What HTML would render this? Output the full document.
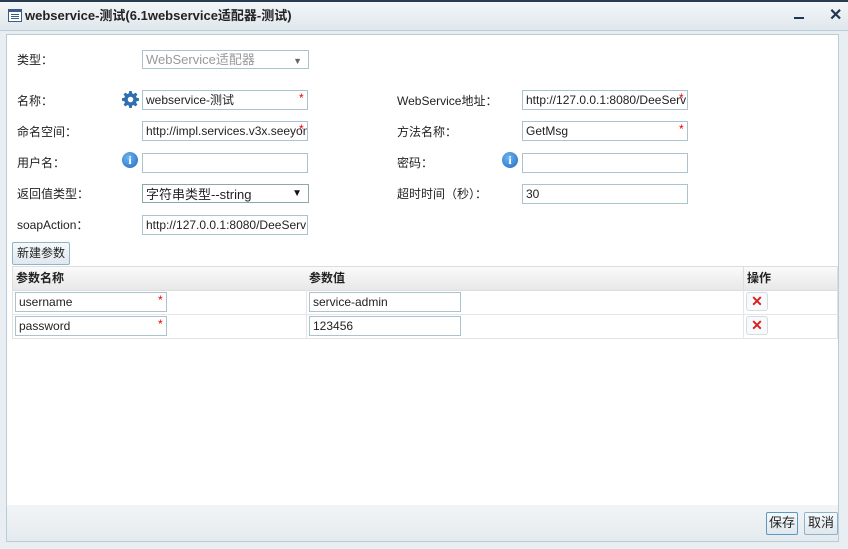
<!DOCTYPE html>
<html><head><meta charset="utf-8"><style>
*{box-sizing:border-box;margin:0;padding:0}
body{width:848px;height:549px;background:#e9eef2;font-family:"Liberation Sans","Noto Sans CJK SC",sans-serif;font-size:12px;line-height:14px;color:#222;position:relative;overflow:hidden}
.a{position:absolute}
.title{left:0;top:0;width:848px;height:31px;background:linear-gradient(#f3f6f8,#dfe7ec);border-top:2px solid #2a3c50;border-bottom:1px solid #b9cdd8}
.body{left:6px;top:34px;width:833px;height:472px;background:#fff;border:1px solid #b9cdd8}
.foot{left:6px;top:505px;width:833px;height:37px;background:linear-gradient(#f2f5f7,#e4eaee);border:1px solid #b9cdd8;border-top:none}
.lbl{font-size:12px;color:#222}
.in{height:20px;border:1px solid #aac3ce;background:#fff;padding:2px 3px;font-size:12px;line-height:15px;white-space:nowrap;overflow:hidden;color:#222}
.star{color:#e00;font-size:12px}
.btn{border:1px solid #8fb4c8;border-radius:2px;background:linear-gradient(#f6f9fb,#dfe8ee);font-size:12px;text-align:center;line-height:20px;color:#222}
.info{width:16px;height:16px;border-radius:50%;background:radial-gradient(circle at 40% 35%,#6fb4ee,#1c6cc4);color:#fff;font-weight:bold;font-size:12px;text-align:center;line-height:16px;font-family:"Liberation Serif",serif}
.th{background:linear-gradient(#fafafa,#e8e8e8);border:1px solid #ddd;font-weight:bold;line-height:22px;padding-left:3px}
.x{width:22px;height:19px;border:1px solid #d3dde3;border-radius:3px;background:#f7f9fa;color:#d92020;font-weight:bold;text-align:center;line-height:17px;font-size:14px}
</style></head><body>
<div class="a title"></div>
<svg class="a" style="left:8px;top:9px" width="14" height="13"><rect x="0.5" y="0.5" width="13" height="12" fill="#fff" stroke="#3b5f84"/><rect x="1" y="1" width="12" height="2" fill="#3b5f84"/><path d="M3 5.5h8M3 7.5h8M3 9.5h8" stroke="#3b5f84"/></svg>
<div class="a" style="left:25px;top:8px;font-weight:bold;font-size:13px;line-height:15px;color:#222">webservice-测试(6.1webservice适配器-测试)</div>
<div class="a" style="left:794px;top:17px;width:10px;height:2px;background:#1f3550"></div>
<div class="a" style="left:829px;top:7px;font-weight:bold;font-size:16px;line-height:17px;color:#1f3550">✕</div>
<div class="a body"></div>
<div class="a foot"></div>

<div class="a lbl" style="left:17px;top:53px">类型：</div>
<div class="a in" style="left:142px;top:50px;width:167px;height:19px;color:#999;font-size:13px;line-height:14px">WebService适配器<span style="position:absolute;right:6px;top:3px;font-size:9px;color:#666">▼</span></div>

<div class="a lbl" style="left:17px;top:94px">名称：</div>
<svg class="a" style="left:122px;top:91px" width="17" height="17" viewBox="0 0 16 16"><path fill="#2f6fb0" d="M6.8 0h2.4l.4 2.2 1.3.6 1.9-1.3 1.7 1.7-1.3 1.9.6 1.3 2.2.4v2.4l-2.2.4-.6 1.3 1.3 1.9-1.7 1.7-1.9-1.3-1.3.6-.4 2.2H6.8l-.4-2.2-1.300-.6-1.9 1.3-1.7-1.7 1.3-1.9-.6-1.3L0 9.2V6.8l2.2-.4.6-1.3-1.3-1.9 1.7-1.7 1.9 1.3 1.3-.6z"/><circle cx="8" cy="8" r="2.6" fill="#fff"/></svg>
<div class="a in" style="left:142px;top:90px;width:166px">webservice-测试</div><div class="a star" style="left:299px;top:91px">*</div>
<div class="a lbl" style="left:397px;top:94px">WebService地址：</div>
<div class="a in" style="left:522px;top:90px;width:166px">http://127.0.0.1:8080/DeeServ</div><div class="a star" style="left:679px;top:91px">*</div>

<div class="a lbl" style="left:17px;top:125px">命名空间：</div>
<div class="a in" style="left:142px;top:121px;width:166px">http://impl.services.v3x.seeyon</div><div class="a star" style="left:299px;top:122px">*</div>
<div class="a lbl" style="left:397px;top:125px">方法名称：</div>
<div class="a in" style="left:522px;top:121px;width:166px">GetMsg</div><div class="a star" style="left:679px;top:122px">*</div>

<div class="a lbl" style="left:17px;top:156px">用户名：</div>
<div class="a info" style="left:122px;top:152px">i</div>
<div class="a in" style="left:142px;top:153px;width:166px"></div>
<div class="a lbl" style="left:397px;top:156px">密码：</div>
<div class="a info" style="left:502px;top:152px">i</div>
<div class="a in" style="left:522px;top:153px;width:166px"></div>

<div class="a lbl" style="left:17px;top:187px">返回值类型：</div>
<div class="a in" style="left:142px;top:184px;width:167px;height:19px;line-height:16px;font-size:13px;border-color:#8aa">字符串类型--string<span style="position:absolute;right:6px;top:1px;font-size:10px;color:#111">▼</span></div>
<div class="a lbl" style="left:397px;top:187px">超时时间（秒）：</div>
<div class="a in" style="left:522px;top:184px;width:166px">30</div>

<div class="a lbl" style="left:17px;top:218px">soapAction：</div>
<div class="a in" style="left:142px;top:215px;width:166px">http://127.0.0.1:8080/DeeServ</div>

<div class="a btn" style="left:12px;top:242px;width:58px;height:23px">新建参数</div>
<div class="a th" style="left:12px;top:266px;width:295px;height:25px">参数名称</div>
<div class="a th" style="left:306px;top:266px;width:438px;height:25px;border-left:none">参数值</div>
<div class="a th" style="left:743px;top:266px;width:95px;height:25px;border-left:1px solid #ddd">操作</div>
<div class="a" style="left:12px;top:290px;width:826px;height:49px;border:1px solid #e2e2e2;border-top:none"></div>
<div class="a" style="left:12px;top:314px;width:826px;height:1px;background:#e6e6e6"></div>
<div class="a" style="left:306px;top:290px;width:1px;height:48px;background:#e6e6e6"></div>
<div class="a" style="left:743px;top:290px;width:1px;height:48px;background:#e6e6e6"></div>
<div class="a in" style="left:15px;top:292px;width:152px">username</div><div class="a star" style="left:158px;top:293px">*</div>
<div class="a in" style="left:15px;top:316px;width:152px">password</div><div class="a star" style="left:158px;top:317px">*</div>
<div class="a in" style="left:309px;top:292px;width:152px">service-admin</div>
<div class="a in" style="left:309px;top:316px;width:152px">123456</div>
<div class="a x" style="left:746px;top:292px">✕</div>
<div class="a x" style="left:746px;top:316px">✕</div>

<div class="a btn" style="left:766px;top:512px;width:32px;height:23px;border-color:#5b9ac0;font-size:13px">保存</div>
<div class="a btn" style="left:804px;top:512px;width:34px;height:23px;font-size:13px">取消</div>
</body></html>
